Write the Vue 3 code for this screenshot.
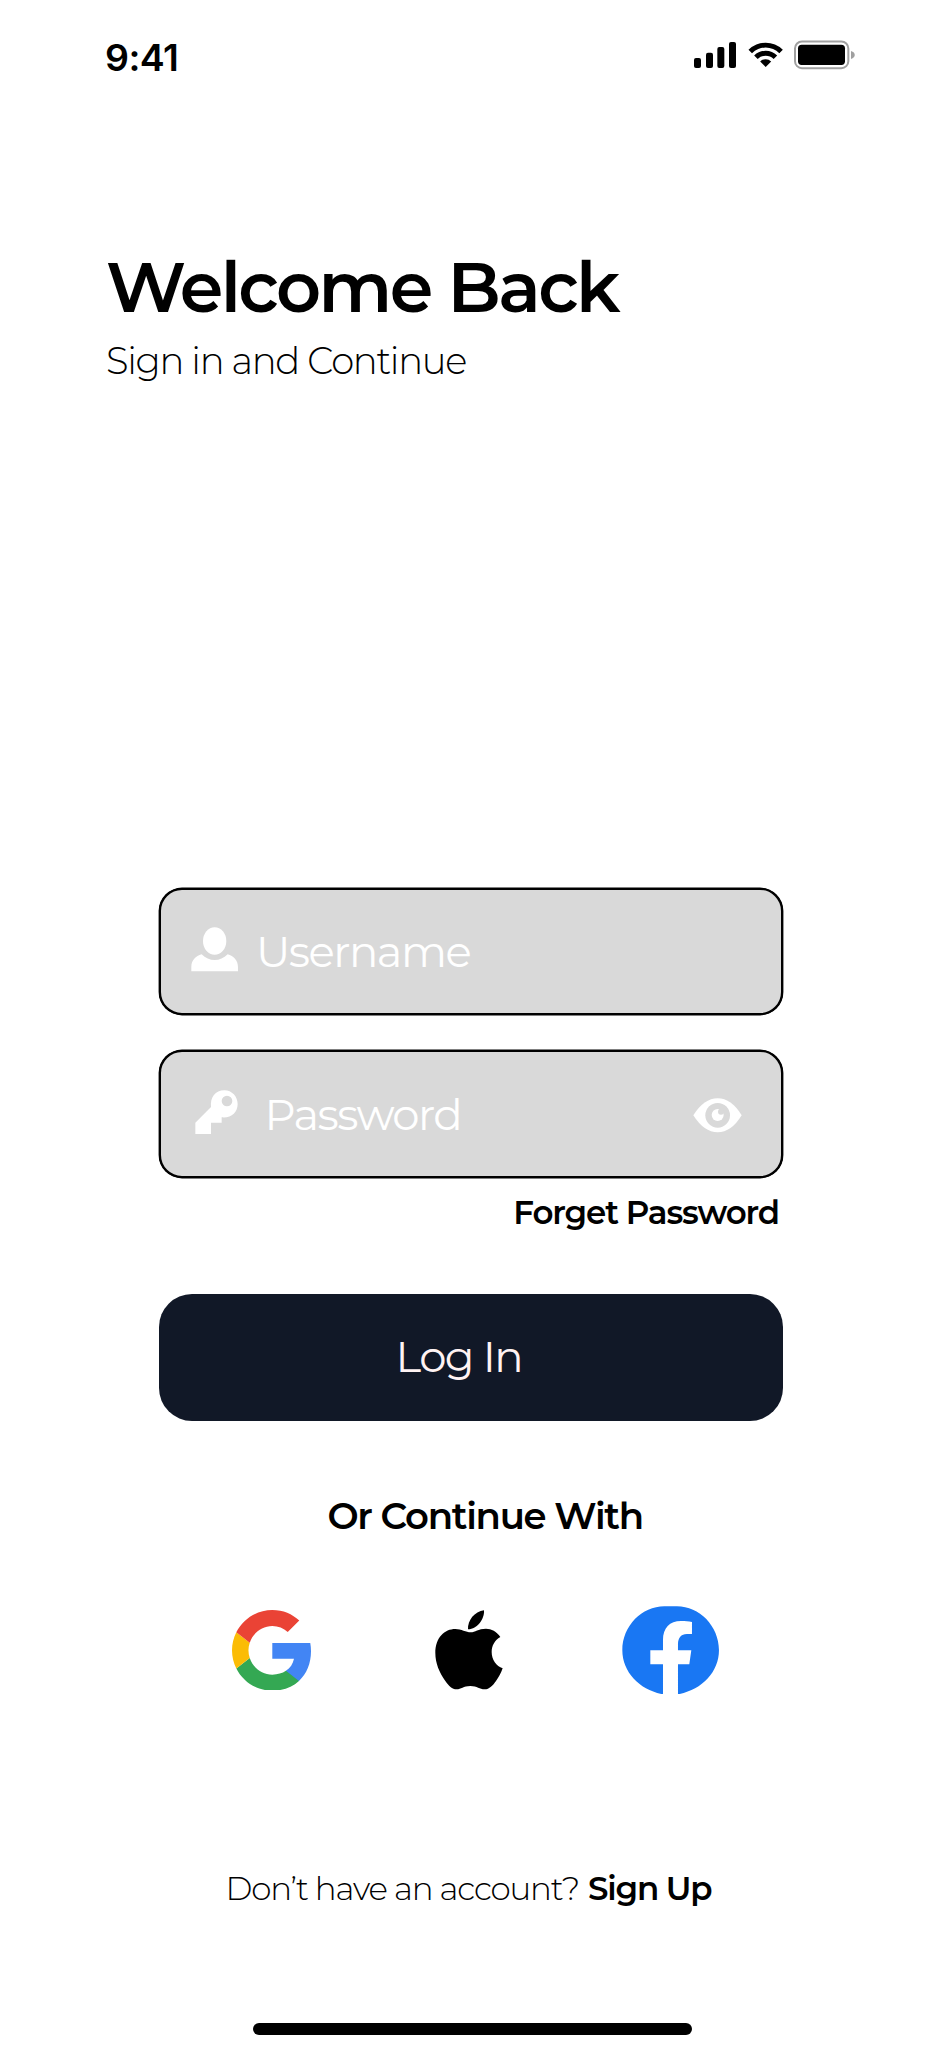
<script setup>
const socials = ['google', 'apple', 'facebook']
</script>

<template>
  <main class="screen">
    <header class="status">
      <span class="time">9:41</span>
      <svg class="indicators" viewBox="36 27 492 96" aria-hidden="true">
        <rect x="39" y="84" width="21" height="30" rx="6" />
        <rect x="75" y="68" width="21" height="46" rx="6" />
        <rect x="109" y="51" width="21" height="63" rx="6" />
        <rect x="144" y="36" width="21" height="78" rx="6" />
        <path d="M202.5 59.5A73 73 0 0 1 305.500 59.500L295 70A57 57 0 0 0 213 70Z" />
        <path d="M219.500 76.500A49 49 0 0 1 288.500 76.500L278 87A34 34 0 0 0 230 87Z" />
        <path d="M237.500 94.500A23 23 0 0 1 270.500 94.500L254 111Z" />
        <rect x="342" y="34.500" width="160" height="80" rx="21" fill="none" stroke="#a0a0a0" stroke-width="6" />
        <rect x="351" y="44" width="141" height="61" rx="11" />
        <path d="M510 63C525 67 525 83 510 87Z" fill="#a0a0a0" />
      </svg>
    </header>

    <section class="intro">
      <h1 class="title">Welcome Back</h1>
      <p class="subtitle">Sign in and Continue</p>
    </section>

    <form class="form" @submit.prevent>
      <div class="field">
        <svg class="user-icon" viewBox="122 140 142 134" aria-hidden="true">
          <ellipse cx="193" cy="182" rx="35" ry="41.500" />
          <path d="M123 273V259C123 241 136 226 154 222C176 245 210 245 232 222C250 226 263 241 263 259V273Z" />
        </svg>
        <span class="hint username">Username</span>
      </div>
      <div class="field second">
        <svg class="key-icon" viewBox="135 149 129 133" aria-hidden="true">
          <path fill-rule="evenodd" d="M136 281V247L183 200C180 171 196 150 223 150C246 150 263 169 263 191C263 217 243 234 215 231V247H183V281ZM231 166A16 16 0 1 0 231 198A16 16 0 1 0 231 166Z" />
        </svg>
        <span class="hint password">Password</span>
        <svg class="eye-icon" viewBox="575 176 147 104" aria-hidden="true">
          <path d="M576 228Q608 177 649 177Q690 177 721 228Q690 279 649 279Q608 279 576 228Z" />
          <circle class="iris" cx="649" cy="228" r="37" />
          <circle cx="649" cy="227" r="18" />
          <circle class="iris" cx="659" cy="217" r="9" />
        </svg>
      </div>
      <a class="forgot">Forget Password</a>
      <button class="login" type="submit"><span>Log In</span></button>
    </form>

    <p class="divider">Or Continue With</p>

    <div class="socials">
      <template v-for="name in socials" :key="name">
        <svg v-if="name === 'google'" class="google" viewBox="1 1 21.56 22" preserveAspectRatio="none">
          <path fill="#4285f4" d="M22.560 12.250c0-.78-.07-1.530-.2-2.250H12v4.260h5.920c-.26 1.370-1.040 2.530-2.210 3.310v2.770h3.570c2.080-1.920 3.280-4.740 3.280-8.090z" />
          <path fill="#34a853" d="M12 23c2.970 0 5.460-.98 7.280-2.660l-3.570-2.770c-.98.66-2.230 1.060-3.710 1.060-2.860 0-5.290-1.930-6.160-4.540L2.180 16.930C3.990 20.530 7.700 23 12 23z" />
          <path fill="#fbbc05" d="M5.840 14.090c-.22-.66-.35-1.360-.35-2.090s.13-1.430.35-2.090L2.180 7.070C1.430 8.550 1 10.220 1 12s.43 3.450 1.180 4.930z" />
          <path fill="#ea4335" d="M12 5.380c1.620 0 3.060.56 4.210 1.640l3.150-3.150C17.450 2.090 14.970 1 12 1 7.700 1 3.990 3.470 2.180 7.070l3.660 2.840c.87-2.600 3.300-4.530 6.160-4.530z" />
        </svg>
        <svg v-else-if="name === 'apple'" class="apple" viewBox="45 46 204 239">
          <path d="M152 113C166 113 174 102 198 102C214 102 230 110 241 127C224 137 215 153 215 172C215 195 229 214 248 221C243 236 236 247 228 259C219 272 208 284 194 284C178 284 172 274 151 274C130 274 123 284 110 284C96 284 86 273 76 259C58 234 46 205 46 175C46 128 74 103 106 103C124 103 138 113 152 113Z" />
          <path d="M144 104C142 78 164 50 192 47C194 73 172 104 144 104Z" />
        </svg>
        <svg v-else class="facebook" viewBox="35 32 292 266">
          <path fill="#1977f3" d="M158 297C90 285 36 232 36 165C36 92 95 33 162 33H200C267 33 326 92 326 165C326 232 272 285 203 297V207H237L243 165H203V146C203 128 212 116 230 116H245V80C235 78 225 77 212 77C178 77 158 98 158 134V165H120V207H158Z" />
        </svg>
      </template>
    </div>

    <p class="signup"><span class="question">Don’t have an account?</span><a class="signup-link">Sign Up</a></p>

    <div class="home-bar"></div>
  </main>
</template>

<style>
body {
  background: #fff;
}
</style>

<style scoped>
.screen {
  box-sizing: border-box;
  width: 945px;
  height: 2048px;
  overflow: hidden;
  display: flex;
  flex-direction: column;
  background: #fff;
  color: #000;
  font-family: Montserrat, Inter, "Liberation Sans", sans-serif;
}
h1, p {
  margin: 0;
}
svg {
  display: block;
  flex: none;
}
span, a, h1, p {
  white-space: nowrap;
}
.status {
  display: flex;
  justify-content: space-between;
  height: 114px;
  padding: 0 88.500px 0 105px;
}
.time {
  font: 600 37.500px/115px Inter, "Liberation Sans", sans-serif;
  letter-spacing: -0.6px;
}
.indicators {
  width: 164px;
  height: 32px;
  margin-top: 39px;
}
.intro {
  padding: 133px 0 0 106px;
}
.title {
  font-size: 70px;
  font-weight: 600;
  line-height: 80px;
  letter-spacing: -2.550px;
}
.subtitle {
  margin: 10px 0 0;
  font-size: 37px;
  font-weight: 300;
  line-height: 48px;
  letter-spacing: -1.300px;
}
.form {
  display: flex;
  flex-direction: column;
  width: 624px;
  margin: 502.500px 0 0 158.600px;
}
.field {
  box-sizing: border-box;
  display: flex;
  align-items: center;
  height: 127.500px;
  padding: 0 39px 0 30px;
  border: 2px solid #000;
  border-radius: 23px;
  background: #d9d9d9;
  box-shadow: 0 0 0 0.4px #000;
}
.field.second {
  margin-top: 35px;
  padding-left: 34px;
}
.field svg {
  fill: #fff;
}
.field .iris {
  fill: #d9d9d9;
}
.user-icon {
  width: 47.300px;
  height: 44.700px;
  margin-top: -4px;
}
.key-icon {
  width: 43px;
  height: 44.300px;
  margin-top: -4px;
}
.eye-icon {
  width: 49px;
  height: 34.700px;
  margin: 3px 0 0 auto;
}
.hint {
  padding-top: 1.500px;
  color: #fff;
  font-size: 43.400px;
  font-weight: 400;
  line-height: 60px;
}
.username {
  margin-left: 18px;
  letter-spacing: -1.450px;
}
.password {
  margin-left: 27px;
  letter-spacing: -1.550px;
}
.forgot {
  align-self: flex-end;
  margin: 15.500px 3.500px 0 0;
  font-size: 32.500px;
  font-weight: 600;
  line-height: 40px;
  letter-spacing: -1.080px;
}
.login {
  height: 127.500px;
  margin-top: 60.500px;
  padding: 0 23.500px 2px 0;
  border: 0;
  border-radius: 33px;
  background: #111827;
  color: #fff3f3;
  font: inherit;
  font-size: 43.400px;
  font-weight: 400;
  letter-spacing: -1.560px;
}
.divider {
  margin: 71px 0 0 327.500px;
  font-size: 37px;
  font-weight: 600;
  line-height: 48px;
  letter-spacing: -1.280px;
}
.socials {
  display: flex;
  align-items: center;
  height: 100px;
  margin: 60px 0 0 232.300px;
}
.google {
  width: 79px;
  height: 80.700px;
}
.apple {
  width: 68px;
  height: 79.700px;
  margin-left: 123.700px;
}
.facebook {
  width: 97.300px;
  height: 88.700px;
  margin-left: 118.700px;
}
.signup {
  display: flex;
  gap: 9px;
  margin: 169px 0 0 225.500px;
  font-size: 32.500px;
  line-height: 40px;
}
.question {
  font-weight: 300;
  letter-spacing: -1.170px;
}
.signup-link {
  font-weight: 600;
  letter-spacing: -1.170px;
}
.home-bar {
  width: 439px;
  height: 11.500px;
  margin: 114px 0 0 252.700px;
  border-radius: 6px;
  background: #000;
}
</style>
